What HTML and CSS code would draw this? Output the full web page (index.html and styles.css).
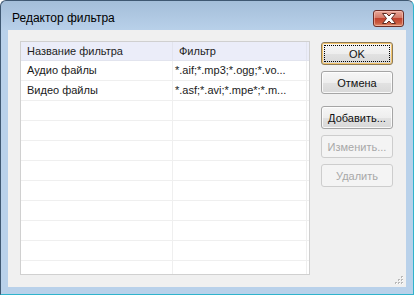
FILE: index.html
```html
<!DOCTYPE html>
<html lang="ru">
<head>
    <meta charset="UTF-8">
    <meta name="viewport" content="width=device-width, initial-scale=1.0">
    <title>Редактор фильтра</title>
    <link rel="stylesheet" href="styles.css">
</head>
<body>

<div class="window">
    <div class="titlebar">
        <span class="title">Редактор фильтра</span>
        <button class="close-button" title="Закрыть">
            <svg width="16" height="11" viewBox="0 0 16 11">
                <path d="M1.5 0.5 H5.5 L8 3 L10.5 0.5 H14.5 L10.5 5.5 L14.5 10.5 H10.5 L8 8 L5.5 10.5 H1.5 L5.5 5.5 Z" fill="#fff" stroke="#5a2a22" stroke-width="1"/>
            </svg>
        </button>
    </div>

    <div class="frame">
        <div class="client">
            <div class="list">
                <div class="row head">
                    <div class="cell name">Название фильтра</div>
                    <div class="cell mask">Фильтр</div>
                </div>
                <div class="row">
                    <div class="cell name">Аудио файлы</div>
                    <div class="cell mask">*.aif;*.mp3;*.ogg;*.vo...</div>
                </div>
                <div class="row">
                    <div class="cell name">Видео файлы</div>
                    <div class="cell mask">*.asf;*.avi;*.mpe*;*.m...</div>
                </div>
                <div class="row"><div class="cell name"></div><div class="cell mask"></div></div>
                <div class="row"><div class="cell name"></div><div class="cell mask"></div></div>
                <div class="row"><div class="cell name"></div><div class="cell mask"></div></div>
                <div class="row"><div class="cell name"></div><div class="cell mask"></div></div>
                <div class="row"><div class="cell name"></div><div class="cell mask"></div></div>
                <div class="row"><div class="cell name"></div><div class="cell mask"></div></div>
                <div class="row"><div class="cell name"></div><div class="cell mask"></div></div>
                <div class="row"><div class="cell name"></div><div class="cell mask"></div></div>
                <div class="row"><div class="cell name"></div><div class="cell mask"></div></div>
            </div>

            <div class="buttons">
                <button class="btn default"><span class="focus">OK</span></button>
                <button class="btn">Отмена</button>
                <button class="btn spaced">Добавить...</button>
                <button class="btn" disabled>Изменить...</button>
                <button class="btn" disabled>Удалить</button>
            </div>

            <svg class="grip" width="9" height="9" viewBox="0 0 9 9">
                <rect x="6" y="0" width="2" height="2" fill="#b8b8b8"/>
                <rect x="3" y="3" width="2" height="2" fill="#b8b8b8"/>
                <rect x="6" y="3" width="2" height="2" fill="#b8b8b8"/>
                <rect x="0" y="6" width="2" height="2" fill="#b8b8b8"/>
                <rect x="3" y="6" width="2" height="2" fill="#b8b8b8"/>
                <rect x="6" y="6" width="2" height="2" fill="#b8b8b8"/>
                <rect x="7" y="1" width="1" height="1" fill="#fff"/>
                <rect x="4" y="4" width="1" height="1" fill="#fff"/>
                <rect x="7" y="4" width="1" height="1" fill="#fff"/>
                <rect x="1" y="7" width="1" height="1" fill="#fff"/>
                <rect x="4" y="7" width="1" height="1" fill="#fff"/>
                <rect x="7" y="7" width="1" height="1" fill="#fff"/>
            </svg>
        </div>
    </div>
</div>

</body>
</html>
```

FILE: styles.css
```css
body {
    margin: 0;
    background-color: #fff;
    font-family: "Liberation Sans", Arial, sans-serif;
    font-size: 11px;
    color: #000;
}
.window {
    box-sizing: border-box;
    width: 414px;
    height: 295px;
    display: flex;
    flex-direction: column;
    border: 1px solid #3f5872;
    border-right-color: #2fb3cc;
    border-bottom-color: #2fb3cc;
    border-radius: 6px 6px 0 0;
    background: linear-gradient(#a4bed9, #b9d1ea 30px, #b9d1ea);
    overflow: hidden;
}
.titlebar {
    height: 29px;
    display: flex;
    align-items: flex-start;
    padding: 0 9px 0 11px;
    flex-shrink: 0;
}
.title {
    font-size: 12px;
    color: #000;
    margin-top: 10px;
    line-height: 14px;
}
.close-button {
    margin-left: auto;
    margin-top: 9px;
    width: 31px;
    height: 17px;
    padding: 0;
    display: flex;
    align-items: center;
    justify-content: center;
    border: 1px solid #6b2e28;
    border-radius: 3px;
    background: linear-gradient(#e9a99b, #d47a68 45%, #c1432f 50%, #c95b41 80%, #e0926f);
    box-shadow: inset 0 0 0 1px rgba(255, 210, 200, 0.5);
}
.frame {
    flex-grow: 1;
    display: flex;
    padding: 0 7px 7px 7px;
}
.client {
    position: relative;
    flex-grow: 1;
    display: flex;
    align-items: flex-start;
    padding: 11px 0 0 12px;
    background-color: #f0f0f0;
}
.list {
    box-sizing: border-box;
    width: 290px;
    height: 234px;
    border: 1px solid #d0d0d0;
    background-color: #fff;
    overflow: hidden;
}
.row {
    display: flex;
    height: 19px;
    border-bottom: 1px solid #efefef;
    color: #1a1a1a;
}
.row.head {
    height: 18px;
    background-color: #ebedf9;
    border-bottom-color: #e2e4ee;
}
.cell {
    box-sizing: border-box;
    line-height: 19px;
    white-space: nowrap;
    overflow: hidden;
    border-right: 1px solid #efefef;
}
.head .cell {
    line-height: 18px;
    color: #1e1e1e;
    border-right-color: #e2e4ee;
}
.cell.name {
    width: 152px;
    padding-left: 6px;
}
.cell.mask {
    width: 134px;
    padding-left: 2px;
}
.head .cell.mask {
    padding-left: 6px;
}
.buttons {
    display: flex;
    flex-direction: column;
    gap: 6px;
    margin-left: 11px;
    margin-top: 1px;
}
.btn {
    box-sizing: border-box;
    width: 72px;
    height: 23px;
    padding: 0;
    font-family: inherit;
    font-size: 11px;
    color: #111;
    border: 1px solid #a5a5a5;
    border-radius: 3px;
    background: linear-gradient(#f6f6f6, #eeeeee 50%, #e2e2e2 51%, #d8d8d8);
    box-shadow: inset 0 0 0 1px rgba(255, 255, 255, 0.8);
}
.btn.spaced {
    margin-top: 6px;
}
.btn.default {
    border-color: #8c7a58;
    box-shadow: inset 0 0 0 1px #f5c66c;
    display: flex;
    padding: 2px;
}
.focus {
    flex-grow: 1;
    display: flex;
    align-items: center;
    justify-content: center;
    border: 1px dotted #000;
}
.btn:disabled {
    color: #a8a8a8;
    border-color: #cdcdcd;
    background: #f4f4f4;
    box-shadow: none;
}
.grip {
    position: absolute;
    right: 2px;
    bottom: 2px;
}
```
